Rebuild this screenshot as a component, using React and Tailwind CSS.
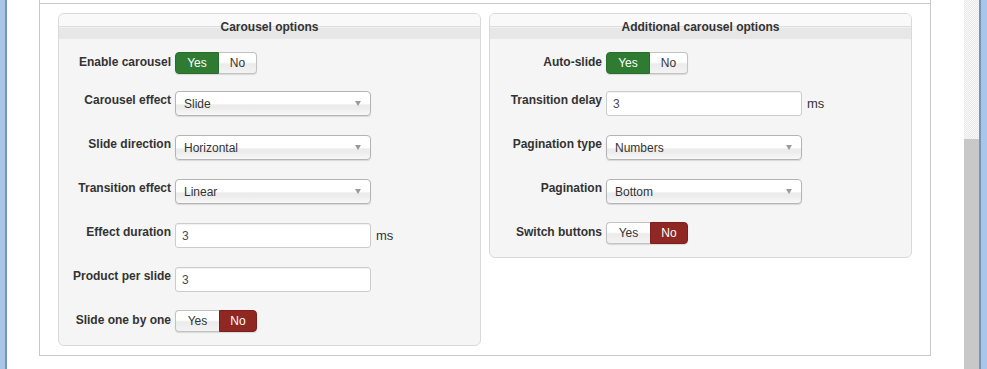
import React from 'react'

const font = { fontFamily: '"Liberation Sans", Arial, sans-serif' }

function Toggle({ value }) {
  const yes = value === 'yes'
  return (
    <div className="flex h-[22px] text-[12px] shadow-[0_1px_1px_rgba(0,0,0,0.12)] rounded-[4px]">
      <span
        className={
          yes
            ? 'flex w-[44px] items-center justify-center rounded-l-[4px] border border-[#2a6c2c] bg-[#2f7b31] text-white'
            : 'flex w-[44px] items-center justify-center rounded-l-[4px] border border-r-0 border-[#c2c2c2] bg-[linear-gradient(to_bottom,#ffffff_0,#ffffff_45%,#ebebeb_55%,#f3f3f3_100%)] text-[#333]'
        }
      >
        Yes
      </span>
      <span
        className={
          yes
            ? 'flex w-[38px] items-center justify-center rounded-r-[4px] border border-l-0 border-[#c2c2c2] bg-[linear-gradient(to_bottom,#ffffff_0,#ffffff_45%,#ebebeb_55%,#f3f3f3_100%)] text-[#333]'
            : 'flex w-[38px] items-center justify-center rounded-r-[4px] border border-[#7c201d] bg-[#8f2723] text-white'
        }
      >
        No
      </span>
    </div>
  )
}

function Select({ text }) {
  return (
    <div className="flex h-[25px] w-[196px] items-center rounded-[4px] border border-[#b4b4b4] bg-[linear-gradient(to_bottom,#ffffff_0,#ffffff_50%,#ececec_56%,#ececec_70%,#f8f8f8_100%)] pl-[8px] text-[12px] text-[#333] shadow-[0_1px_1px_rgba(0,0,0,0.12)]">
      <span>{text}</span>
      <svg className="ml-auto mr-[9px]" width="6" height="5" viewBox="0 0 6 5">
        <path d="M0 0H6L3 5Z" fill="#9a9a9a" />
      </svg>
    </div>
  )
}

function Input({ value, unit }) {
  return (
    <div className="flex items-center">
      <div className="flex h-[25px] w-[196px] items-center rounded-[3px] border border-[#cccccc] bg-white pl-[6px] text-[12px] text-[#4a4a5c] shadow-[inset_0_1px_1px_rgba(0,0,0,0.06)]">
        {value}
      </div>
      {unit && <span className="ml-[5px] text-[13px] text-[#333]">{unit}</span>}
    </div>
  )
}

function Row({ label, children, mb, toggle }) {
  return (
    <div className={`flex items-start ${mb}`}>
      <label
        className={
          toggle
            ? 'w-[112px] pt-[2px] pr-0 text-right text-[12px] font-bold leading-[16px] text-[#333]'
            : 'w-[112px] pt-[1px] pr-0 text-right text-[12px] font-bold leading-[16px] text-[#333]'
        }
      >
        {label}
      </label>
      <div className="ml-[4px]">{children}</div>
    </div>
  )
}

function Panel({ title, children }) {
  return (
    <div className="w-[423px] self-start overflow-hidden rounded-[6px] border border-[#d9d9d9] bg-[#f5f5f5]">
      <div className="flex h-[25px] items-center justify-center bg-[linear-gradient(to_bottom,#f9f9f9_0,#f9f9f9_12px,#dddddd_12px,#dddddd_13px,#f1f1f1_13px,#f1f1f1_14px,#e7e7e7_14px,#e7e7e7_100%)] text-[12px] font-bold text-[#333]">
        {title}
      </div>
      <div className="px-0 pt-[13px] pb-[13px]">{children}</div>
    </div>
  )
}

export default function App() {
  return (
    <div className="flex h-[369px] w-[987px] overflow-hidden bg-white" style={font}>
      {/* window edge */}
      <div className="w-[7px] shrink-0 border-r-2 border-[#7594bd] bg-[#a9c5e8]"></div>

      <div className="ml-[32px] w-[892px] shrink-0 self-start border-x border-b border-[#c8c8c8]">
        <div className="h-[3px]"></div>
        <div className="flex gap-[8px] border-t border-[#c8c8c8] px-[18px] pt-[9px] pb-[9px]">
          <Panel title="Carousel options">
            <Row label="Enable carousel" mb="mb-[17px]" toggle>
              <Toggle value="yes" />
            </Row>
            <Row label="Carousel effect" mb="mb-[19px]">
              <Select text="Slide" />
            </Row>
            <Row label="Slide direction" mb="mb-[19px]">
              <Select text="Horizontal" />
            </Row>
            <Row label="Transition effect" mb="mb-[19px]">
              <Select text="Linear" />
            </Row>
            <Row label="Effect duration" mb="mb-[19px]">
              <Input value="3" unit="ms" />
            </Row>
            <Row label="Product per slide" mb="mb-[18px]">
              <Input value="3" />
            </Row>
            <Row label="Slide one by one" mb="mb-0" toggle>
              <Toggle value="no" />
            </Row>
          </Panel>

          <Panel title="Additional carousel options">
            <Row label="Auto-slide" mb="mb-[17px]" toggle>
              <Toggle value="yes" />
            </Row>
            <Row label="Transition delay" mb="mb-[19px]">
              <Input value="3" unit="ms" />
            </Row>
            <Row label="Pagination type" mb="mb-[19px]">
              <Select text="Numbers" />
            </Row>
            <Row label="Pagination" mb="mb-[18px]">
              <Select text="Bottom" />
            </Row>
            <Row label="Switch buttons" mb="mb-0" toggle>
              <Toggle value="no" />
            </Row>
          </Panel>
        </div>
      </div>

      {/* scrollbar */}
      <div className="ml-[33px] flex w-[15px] shrink-0 flex-col">
        <div className="h-[139px] bg-[repeating-conic-gradient(#e9e9e9_0_25%,#f8f8f8_0_50%)] bg-[length:2px_2px]"></div>
        <div className="flex-1 bg-[#c8c8c8]"></div>
      </div>

      {/* window edge */}
      <div className="w-[8px] shrink-0 border-l-2 border-[#7594bd] bg-[#a9c5e8]"></div>
    </div>
  )
}
